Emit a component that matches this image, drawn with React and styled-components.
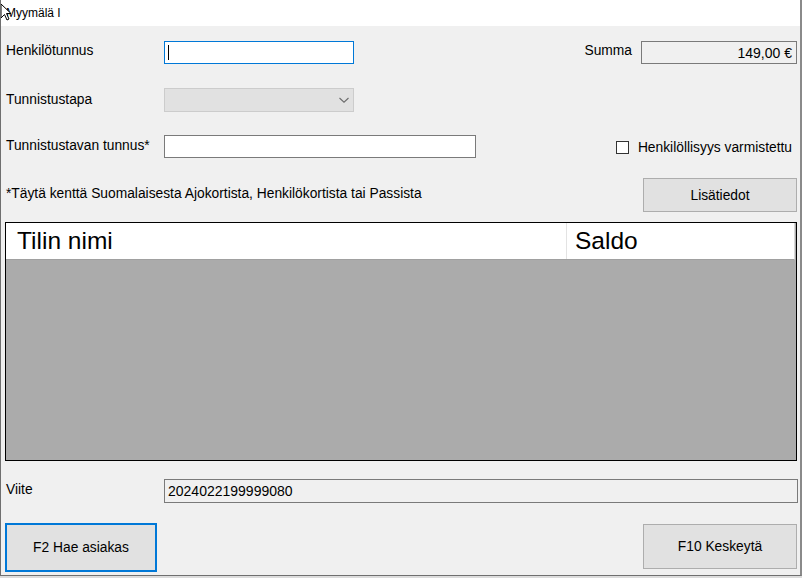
import React from 'react'
import styled, { createGlobalStyle } from 'styled-components'

const GlobalStyle = createGlobalStyle`
  html, body {
    margin: 0;
    padding: 0;
    background: #dcdcdc;
  }
  body {
    font-family: 'Liberation Sans', Arial, sans-serif;
    color: #000;
  }
`

const FS = '13.8px'

const Window = styled.div`
  position: relative;
  width: 802px;
  height: 576px;
  box-sizing: border-box;
  background: #f0f0f0;
  border-left: 1px solid #6f6f6f;
  border-right: 2px solid #8a8a8a;
  border-bottom: 1px solid #6f6f6f;
  display: flex;
  flex-direction: column;
  overflow: hidden;
`

const TitleBar = styled.div`
  height: 26px;
  background: #fff;
  display: flex;
  align-items: center;
  padding-left: 5px;
  font-size: 12px;
  flex-shrink: 0;
`

const Cursor = styled.svg`
  position: absolute;
  left: -1px;
  top: 3px;
`

const Content = styled.div`
  flex: 1;
  display: flex;
  flex-direction: column;
  padding: 0 3px 0 3px;
`

const Row = styled.div`
  display: flex;
  align-items: ${(p) => p.$align || 'center'};
  height: ${(p) => p.$h}px;
  margin-top: ${(p) => p.$mt}px;
  flex-shrink: 0;
`

const Label = styled.div`
  width: 160px;
  padding-left: 2px;
  box-sizing: border-box;
  font-size: ${FS};
  margin-top: ${(p) => p.$dy || 0}px;
  flex-shrink: 0;
`

const TextBox = styled.div`
  width: ${(p) => p.$w}px;
  height: 100%;
  box-sizing: border-box;
  background: ${(p) => (p.$readonly ? '#f0f0f0' : '#fff')};
  border: 1px solid ${(p) => (p.$focus ? '#0078d7' : '#7a7a7a')};
  display: flex;
  align-items: center;
  justify-content: ${(p) => (p.$right ? 'flex-end' : 'flex-start')};
  padding: 0 4px 0 3px;
  font-size: 14px;
  flex-shrink: 0;
`

const Caret = styled.span`
  width: 1px;
  height: 15px;
  background: #000;
`

const Combo = styled.div`
  width: 190px;
  height: 100%;
  box-sizing: border-box;
  background: #e1e1e1;
  border: 1px solid #cccccc;
  display: flex;
  align-items: center;
  justify-content: flex-end;
  padding-right: 3px;
  flex-shrink: 0;
`

const Spacer = styled.div`
  flex: 1;
`

const SideLabel = styled.div`
  font-size: ${FS};
  margin-right: 9px;
  align-self: flex-start;
  margin-top: 2px;
`

const CheckWrap = styled.div`
  display: flex;
  align-items: center;
  font-size: ${FS};
  margin-right: 5px;
  margin-top: 1px;
`

const CheckBox = styled.span`
  width: 13px;
  height: 13px;
  box-sizing: border-box;
  border: 1px solid #333;
  background: #fff;
  margin-right: 9px;
`

const Note = styled.div`
  font-size: ${FS};
  padding-left: 2px;
  margin-top: -4px;
`

const Button = styled.div`
  width: ${(p) => p.$w}px;
  height: ${(p) => p.$h}px;
  box-sizing: border-box;
  background: #e1e1e1;
  border: ${(p) => (p.$default ? '2px solid #0078d7' : '1px solid #adadad')};
  display: flex;
  align-items: center;
  justify-content: center;
  font-size: ${FS};
  margin-top: ${(p) => p.$mt || 0}px;
  margin-left: ${(p) => p.$ml || 0}px;
  flex-shrink: 0;
`

const Grid = styled.div`
  margin-top: 10px;
  margin-left: 1px;
  height: 239px;
  box-sizing: border-box;
  border: 1px solid #000;
  background: #ababab;
  display: flex;
  flex-direction: column;
  flex-shrink: 0;
`

const GridHeader = styled.div`
  height: 36px;
  background: #fff;
  display: flex;
  border-bottom: 1px solid #a0a0a0;
  margin-right: 1px;
  border-right: 1px solid #d8d8d8;
`

const HeaderCell = styled.div`
  width: ${(p) => (p.$w ? `${p.$w}px` : 'auto')};
  flex: ${(p) => (p.$w ? 'none' : 1)};
  box-sizing: border-box;
  border-right: ${(p) => (p.$w ? '1px solid #e3e3e3' : 'none')};
  display: flex;
  align-items: center;
  padding-left: ${(p) => p.$pl}px;
  font-size: 24.5px;
  font-family: 'Liberation Sans', Arial, sans-serif;
`

const Chevron = () => (
  <svg width="12" height="8" viewBox="0 0 12 8">
    <path d="M1.5 2 L6 6.2 L10.5 2" fill="none" stroke="#6d6d6d" strokeWidth="1.1" />
  </svg>
)

export default function App() {
  return (
    <>
      <GlobalStyle />
      <Window>
        <TitleBar>Myymälä I</TitleBar>
        <Cursor width="12" height="20" viewBox="0 0 12 20">
          <path d="M1 1 L1 15 L4.5 11.5 L7 17 L9 16 L6.5 10.5 L11 10.5 Z" fill="#fff" stroke="#000" strokeWidth="1" />
        </Cursor>
        <Content>
          <Row $h={23} $mt={15}>
            <Label $dy={-4}>Henkilötunnus</Label>
            <TextBox $w={190} $focus>
              <Caret />
            </TextBox>
            <Spacer />
            <SideLabel>Summa</SideLabel>
            <TextBox $w={156} $readonly $right>
              149,00 €
            </TextBox>
          </Row>
          <Row $h={24} $mt={24}>
            <Label $dy={-2}>Tunnistustapa</Label>
            <Combo>
              <Chevron />
            </Combo>
          </Row>
          <Row $h={23} $mt={23}>
            <Label $dy={-2}>Tunnistustavan tunnus*</Label>
            <TextBox $w={312} />
            <Spacer />
            <CheckWrap>
              <CheckBox />
              Henkilöllisyys varmistettu
            </CheckWrap>
          </Row>
          <Row $h={34} $mt={20}>
            <Note>*Täytä kenttä Suomalaisesta Ajokortista, Henkilökortista tai Passista</Note>
            <Spacer />
            <Button $w={154} $h={34}>
              Lisätiedot
            </Button>
          </Row>
          <Grid>
            <GridHeader>
              <HeaderCell $w={561} $pl={11}>
                Tilin nimi
              </HeaderCell>
              <HeaderCell $pl={8}>Saldo</HeaderCell>
            </GridHeader>
          </Grid>
          <Row $h={24} $mt={18}>
            <Label $dy={-4}>Viite</Label>
            <TextBox $w={634} $readonly>
              2024022199999080
            </TextBox>
          </Row>
          <Row $h={49} $mt={20} $align="flex-start">
            <Button $w={152} $h={49} $default $ml={1}>
              F2 Hae asiakas
            </Button>
            <Spacer />
            <Button $w={154} $h={45} $mt={1}>
              F10 Keskeytä
            </Button>
          </Row>
        </Content>
      </Window>
    </>
  )
}
